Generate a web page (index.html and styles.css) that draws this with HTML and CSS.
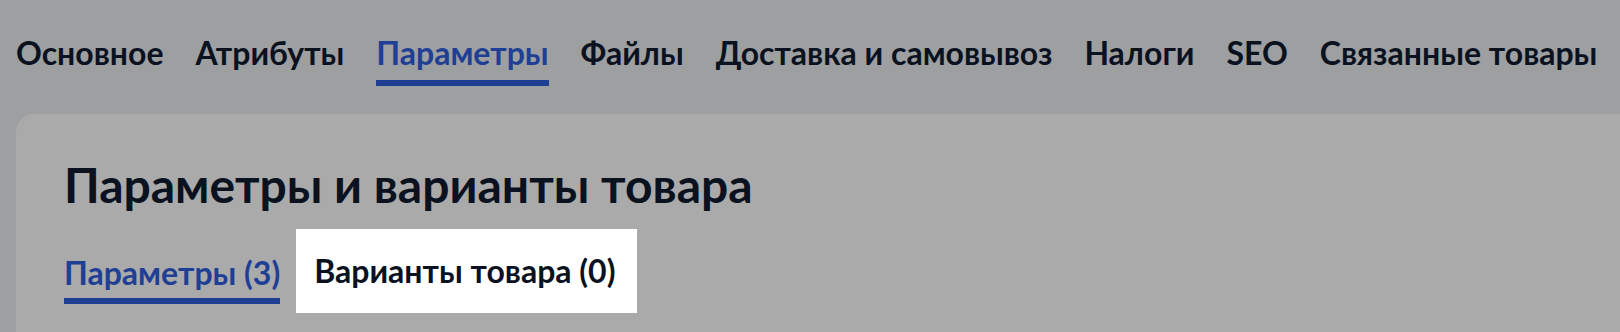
FILE: index.html
```html
<!DOCTYPE html>
<html lang="ru">
<head>
<meta charset="utf-8">
<title>Параметры</title>
<link rel="stylesheet" href="styles.css">
</head>
<body>
<nav class="tabs">
  <a class="tab">Основное</a>
  <a class="tab">Атрибуты</a>
  <a class="tab active">Параметры</a>
  <a class="tab">Файлы</a>
  <a class="tab">Доставка и самовывоз</a>
  <a class="tab">Налоги</a>
  <a class="tab">SEO</a>
  <a class="tab">Связанные товары</a>
</nav>
<section class="card">
  <h1 class="title">Параметры и варианты товара</h1>
  <div class="subtabs">
    <a class="subtab active">Параметры (3)</a>
    <a class="subtab highlight">Варианты товара (0)</a>
  </div>
</section>
</body>
</html>
```
FILE: styles.css
```css
html, body {
  margin: 0;
  padding: 0;
}
body {
  background: #9e9fa1;
  font-family: "Lato", "Noto Sans", sans-serif;
  color: #0a121f;
  width: 1620px;
  height: 332px;
  overflow: hidden;
}
.tabs {
  display: flex;
  gap: 32px;
  padding: 33px 0 0 16px;
  white-space: nowrap;
}
.tab {
  font-size: 32px;
  font-weight: 700;
  line-height: 40px;
  padding-bottom: 7px;
  border-bottom: 6px solid transparent;
}
.tab.active {
  color: #1f3f95;
  border-bottom-color: #1f3f95;
}
.card {
  margin: 28px 0 0 16px;
  background: #aaaaaa;
  border-radius: 18px 0 0 0;
  padding: 43px 0 19px 48px;
}
.title {
  margin: 0;
  font-size: 48px;
  line-height: 56px;
  font-weight: 700;
}
.subtabs {
  display: flex;
  align-items: flex-start;
  gap: 16px;
  margin-top: 16px;
}
.subtab {
  font-weight: 700;
  white-space: nowrap;
  font-size: 32px;
  line-height: 40px;
}
.subtab.active {
  margin-top: 24px;
  color: #1f3f95;
  padding-bottom: 5px;
  border-bottom: 6px solid #1f3f95;
}
.subtab.highlight {
  background: #ffffff;
  padding: 22px 22px 22px 18px;
}
```
